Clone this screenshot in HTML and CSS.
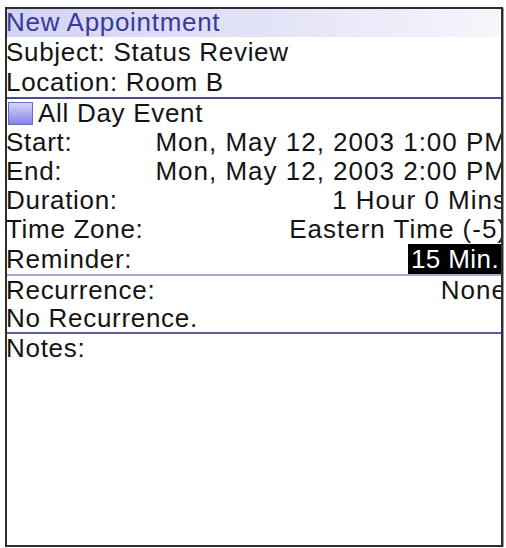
FILE: index.html
```
<!DOCTYPE html>
<html lang="en">
<head>
<meta charset="utf-8">
<title>New Appointment</title>
<link rel="stylesheet" href="styles.css">
</head>
<body>
<div class="screen">
  <div class="title">New Appointment</div>
  <div class="row row-tall">Subject: Status Review</div>
  <div class="row row-tall">Location: Room B</div>
  <div class="sep sep-dark"></div>
  <div class="row check-row"><span class="checkbox"></span><span>All Day Event</span></div>
  <div class="row field"><span class="label">Start:</span><span class="val">Mon, May 12, 2003 1:00 PM</span></div>
  <div class="row field"><span class="label">End:</span><span class="val">Mon, May 12, 2003 2:00 PM</span></div>
  <div class="row field"><span class="label">Duration:</span><span class="val">1 Hour 0 Mins</span></div>
  <div class="row field"><span class="label">Time Zone:</span><span class="val">Eastern Time (-5)</span></div>
  <div class="row row-tall field"><span class="label">Reminder:</span><span class="val sel">15 Min.</span></div>
  <div class="sep sep-light"></div>
  <div class="row row-short field"><span class="label">Recurrence:</span><span class="val">None</span></div>
  <div class="row row-short">No Recurrence.</div>
  <div class="sep sep-mid"></div>
  <div class="row">Notes:</div>
</div>
</body>
</html>
```
FILE: styles.css
```
html, body {
  margin: 0;
  padding: 0;
  background: #ffffff;
}

body {
  font-family: "Liberation Sans", Arial, sans-serif;
  font-size: 26px;
  letter-spacing: 0.7px;
  color: #141414;
}

.screen {
  box-sizing: border-box;
  width: 498px;
  height: 540px;
  margin: 7px 0 0 5px;
  border: 2px solid #2e2e2e;
  box-shadow: 1px 1px 0 #9a9a9a;
  overflow: hidden;
  display: flex;
  flex-direction: column;
}

.title {
  height: 28px;
  line-height: 26px;
  color: #3a3a98;
  background: linear-gradient(to right, #d2d2f6 0%, #e4e4f8 55%, #f6f6fc 100%);
  white-space: nowrap;
  text-indent: -1px;
  flex: none;
}

.row {
  height: 29px;
  line-height: 29px;
  white-space: nowrap;
  flex: none;
  text-indent: -1px;
}

.row-tall {
  height: 30px;
  line-height: 30px;
}

.row-short {
  height: 28px;
  line-height: 28px;
}

.field {
  display: flex;
  justify-content: space-between;
  text-indent: 0;
}

.label {
  margin-left: -1px;
}

.val {
  letter-spacing: 1px;
  margin-right: -6px;
}

.val.sel {
  background: #000000;
  color: #ffffff;
  margin-right: 0;
  padding: 0 2px 0 3px;
  letter-spacing: 0.4px;
}

.check-row {
  display: flex;
  align-items: center;
  text-indent: 0;
}

.checkbox {
  box-sizing: border-box;
  width: 25px;
  height: 23px;
  margin: 0 5px 0 1px;
  border: 1px solid #6a6ac4;
  background: linear-gradient(to bottom, #d6d6f7 0%, #a8a8f0 55%, #8686e6 100%);
}

.sep {
  height: 2px;
  flex: none;
}

.sep-dark {
  background: #4c4c94;
}

.sep-light {
  background: #a6a6d6;
}

.sep-mid {
  background: #5c5ca8;
}
```
